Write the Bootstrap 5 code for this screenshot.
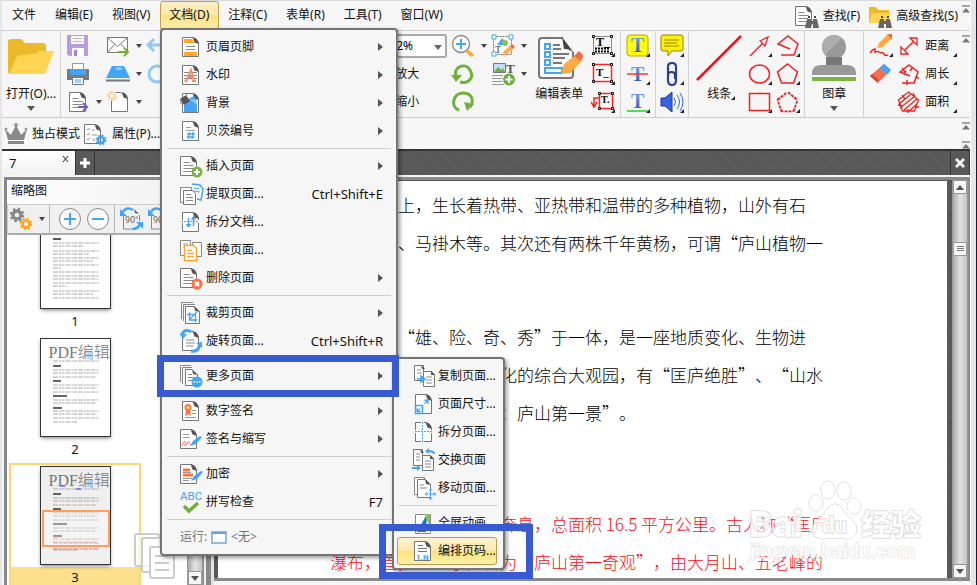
<!DOCTYPE html>
<html lang="zh-CN">
<head>
<meta charset="utf-8">
<meta name="viewport" content="width=device-width, initial-scale=1">
<title>PDF编辑器</title>
<link rel="stylesheet" href="https://cdn.jsdelivr.net/npm/bootstrap@5.3.0/dist/css/bootstrap.min.css">
<style>
:root { --ui: #f6f6f6; --line: #cfcfcf; --mark: #395bd2; }
body { font: 12px/18px "Noto Sans", "Noto Sans CJK SC", sans-serif; color: #111; background: #e6e6e6; overflow: hidden; }
button { background: none; border: 0; padding: 0; color: inherit; font: inherit; white-space: nowrap; }
svg { display: block; flex: none; }
.ic { width: 24px; height: 24px; }
.app { margin: 0 5px 0 2px; background: var(--ui); border-right: 1px solid #fff; }
.desk { border-right: 1px solid #0a1c4c; }
/* menu bar */
.bar-menu { height: 31px; padding-left: 1px; border-top: 1px solid #d9d9d9; border-bottom: 1px solid var(--line); }
.bar-menu .top-item { height: 28px; padding: 0 9px 0 8px; border: 1px solid transparent; border-radius: 3px 3px 0 0; }
.bar-menu .top-item.on { background: linear-gradient(#fbeeca, #fce9a8 48%, #fadf83 52%, #fff0a8); border-color: #c3a04f; }
.pin { width: 8px; height: 8px; }
/* tool bar */
.bar-tools { height: 87px; border-bottom: 1px solid var(--line); }
.tool-group { padding: 1px 5px 0 5px; position: relative; }
.ruled { border-right: 1px solid #d2d2d2; }
.tool-col > * { height: 28px; display: flex; align-items: center; }
.caret::after { content: ""; border: 3px solid transparent; border-top: 4px solid #444; border-bottom: 0; margin-left: 6px; }
.more { position: relative; }
.more::after { content: ""; position: absolute; right: 0; bottom: 3px; border-left: 4px solid transparent; border-bottom: 4px solid #222; }
.big { display: flex; flex-direction: column; align-items: center; height: 84px; }
.down { border: 4px solid transparent; border-top: 5px solid #555; border-bottom: 0; margin-top: 3px; }
.c-40 { width: 40px; } .c-50 { width: 50px; } .c-24 { width: 24px; } .c-104 { width: 104px; }
.zoom-group { margin-left: 172px; }
.zoom-box { width: 100px; height: 24px !important; margin: 2px 0; border: 2px solid #aaa; border-radius: 3px; background: #fff; appearance: none; padding: 0 0 0 30px; font: inherit; }
.zoom-wrap { position: relative; }
.zoom-wrap::after { content: ""; position: absolute; right: 9px; top: 13px; border: 4px solid transparent; border-top: 5px solid #666; border-bottom: 0; }
.big svg { width: 48px; height: 48px; margin: 2px 0 3px; }
.bar-extra { height: 31px; padding-left: 2px; }
/* tabs */
.bar-tabs { height: 26px; background: repeating-linear-gradient(45deg, #565656 0 1px, #5b5b5b 1px 3px); border-top: 2px solid #333; }
.file-tab { width: 73px; background: linear-gradient(#fff, #f1f1f1); padding: 0 6px 0 7px; font-size: 13px; }
.tab-btn { width: 20px; border-right: 1px solid #333; border-left: 1px solid #333; }
.work { min-height: 0; padding-top: 2px; }
/* thumbnails */
.side { width: 200px; margin-left: 2px; border: 3px solid #898989; border-bottom: 0; border-right-width: 1px; background: var(--ui); }
.side-head { height: 24px; font-size: 12px; line-height: 21px; padding: 0 4px; background: linear-gradient(90deg, #fff, #efefef); }
.side-tools { height: 31px; border: 1px solid #ccc; border-bottom: 2px solid #aaa; background: #f0f0f0; padding: 0 1px; }
.thumb-list { margin: -28px auto 0 2px; width: 132px; }
.thumb { height: 128px; padding-top: 4px; text-align: center; border: 0 solid #fcd873; }
.thumb.on { border-width: 2px; padding-top: 2px; background: linear-gradient(#fff 0 102px, #fde08c 102px); }
.sheet { width: 69px; height: 97px; margin: 0 auto; background: #fff; outline: 1px solid #333; box-shadow: 0 2px 4px #0008; overflow: hidden; position: relative; }
.sheet svg { width: 69px; height: 97px; }
.sheet-title { font: 300 16px/20px "Liberation Serif", "Noto Sans CJK SC", serif; color: #777; position: absolute; left: 8px; top: 4px; white-space: nowrap; }
.view-box { position: absolute; left: 1px; right: 0; top: 43px; height: 37px; border: 2px solid #ff9c62; background: #fff5; }
.thumb.on .sheet { background: #efefef; }
.page-no { font-size: 13px; line-height: 27px; }
.track { width: 16px; background: linear-gradient(90deg, #a9a9a9, #e2e2e2 50%, #c4c4c4); border: 1px solid #999; border-width: 0 1px; }
.track button { width: 100%; height: 14px; background: #f6f6f6; border: 1px solid #999; display: flex; align-items: center; justify-content: center; }
.split { width: 10px; background: linear-gradient(90deg, #eee 0 2px, #888 2px 7px, #e3e3e3 7px); }
/* document */
.viewer { border: 3px solid #8a8a8a; border-left: 0; border-right-width: 2px; }
.desk-dark { background: repeating-linear-gradient(45deg, #545454 0 1px, #5b5b5b 1px 3px); padding: 1px 5px 0 4px; }
.paper { background: #fff; padding: 5px 0 0 112px; font: 300 17px/38px "Noto Sans CJK SC", sans-serif; color: #000; text-spacing-trim: space-all; font-kerning: none; }
.paper p { margin: 0; height: 38px; white-space: nowrap; }
.paper .para-gap { height: 18px; } .paper .para-big { height: 35px; }
.in-4 { padding-left: 4em; } .in-10 { padding-left: 10em; }
.paper .red { color: #f2121c; }
/* pop-up menus */
.pop { display: block; padding: 3px 0; background: var(--ui); border: 2px solid #747474; border-radius: 4px; font-size: 12px; color: #111; box-shadow: 2px 2px 4px #0006; min-width: 0; z-index: 20; }
.pop-main { left: 160px; top: 28px; width: 238px; }
.pop-sub { left: 392px; top: 357px; width: 113px; z-index: 21; }
.pop .dropdown-item { height: 28px; display: flex; align-items: center; padding: 0 13px 0 18px; color: inherit; font-size: 12px; }
.pop .dropdown-item span { padding-left: 2px; }
.pop .dropdown-item kbd { margin-left: auto; background: none; color: inherit; padding: 0; font: inherit; font-size: 13px; }
.pop .dropdown-divider { margin: 3px 5px; border-color: #cfcfcf; opacity: 1; }
.sub::after { content: ""; margin-left: auto; border: 4px solid transparent; border-left: 5px solid #555; border-right: 0; }
.pop-sub .dropdown-item { padding: 0 4px 0 18px; }
.pop-sub .dropdown-item.hot { background: linear-gradient(#fdf3d3, #fde9ab 48%, #fce07d 52%, #fff3a3); border: 1px solid #bd9a55; border-radius: 3px; margin: 0 3px; width: auto; padding: 0 0 0 14px; }
.frame { position: absolute; border: 7px solid var(--mark); z-index: 30; pointer-events: none; }
.frame-a { left: 157px; top: 355px; width: 242px; height: 42px; }
.frame-b { left: 379px; top: 524px; width: 154px; height: 55px; }
.stamp-brand { position: absolute; left: 748px; top: 478px; width: 184px; height: 88px; pointer-events: none; }
.stamp-copy { position: absolute; left: 133px; top: 532px; width: 44px; height: 48px; }
</style>
<script src="https://cdn.jsdelivr.net/npm/bootstrap@5.3.0/dist/js/bootstrap.bundle.min.js"></script>
</head>
<body class="vh-100 position-relative">
<svg width="0" height="0" class="position-absolute" aria-hidden="true">
<defs>
<linearGradient id="gT" x1="0" x2="0" y1="0" y2="1"><stop offset="0" stop-color="#7fb0f0"/><stop offset="1" stop-color="#1d50b0"/></linearGradient>
<symbol id="doc" viewBox="0 0 24 24"><path d="M13 2.500H2.500v19h16V8" fill="#fff" stroke="#777"/><path d="M12.500 2c3 .3 6 3 6.500 7l-4.500-1.500z" fill="#555"/></symbol>
<symbol id="ln" viewBox="0 0 24 24"><path d="M5.500 8.500h6M5.500 11.500h10M5.500 14.500h10M5.500 17.500h8" stroke="#888" fill="none"/></symbol>
<symbol id="docl" viewBox="0 0 24 24"><use href="#doc"/><use href="#ln"/></symbol>
<symbol id="head" viewBox="0 0 24 24"><use href="#doc"/><path d="M4 4h8l3 4H4zM4 17h13v4H4z" fill="#ffa726"/><path d="M6 11.500h9M6 14.500h9" stroke="#888"/></symbol>
<symbol id="water" viewBox="0 0 24 24"><use href="#doc"/><path d="M4 9.500h13M4 12.500h13M4 15.500h13" stroke="#888"/><path d="M6 18l5-11 3 11M8 14h5M4.500 18h3M12 18h4" stroke="#ff8a65" stroke-width="2" fill="none"/></symbol>
<symbol id="back" viewBox="0 0 24 24"><use href="#doc"/><path d="M4 10l10-5 3 4v12H4z" fill="#42a5f5"/><path d="M9 8l8 1v5l-5-4z" fill="#90caf9"/><path d="M0 8l6-4 4 6-6 4z" fill="#555"/><path d="M6 4l2-2M1 9v4" stroke="#777"/></symbol>
<symbol id="bates" viewBox="0 0 24 24"><use href="#doc"/><path d="M6 8.500h5M6 11.500h9" stroke="#999"/><path d="M9.500 13l-1 7M13 13l-1 7M7 15h8M6.500 18h8" stroke="#42a5f5" stroke-width="1.300"/></symbol>
<symbol id="ins" viewBox="0 0 24 24"><g transform="translate(-2 0)"><use href="#docl" width="24" height="24"/></g><circle cx="17" cy="18" r="5.500" fill="#7cb342"/><path d="M17 15v6M14 18h6" stroke="#fff" stroke-width="2"/></symbol>
<symbol id="del" viewBox="0 0 24 24"><g transform="translate(-2 0)"><use href="#docl" width="24" height="24"/></g><circle cx="17" cy="18" r="5.500" fill="#ff7043"/><path d="M15 16l4 4M19 16l-4 4" stroke="#fff" stroke-width="2"/></symbol>
<symbol id="ext" viewBox="0 0 24 24"><path d="M12 2l8 1 3 4-2 11-4-1" fill="#fff" stroke="#42a5f5" stroke-width="1.500"/><path d="M14 6l5 1M14 9l6 1" stroke="#42a5f5"/><path d="M.5 5.500h11v15H.5z" fill="#fff" stroke="#888"/><path d="M3.500 8.500h9l3 3v11h-12z" fill="#fff" stroke="#777"/><path d="M6 12.500h5M6 15.500h7M6 18.500h7" stroke="#888"/></symbol>
<symbol id="spl" viewBox="0 0 24 24"><use href="#doc"/><path d="M0 11.500h22" stroke="#f6f6f6" stroke-width="3"/><path d="M1 11.500h18" stroke="#999" stroke-dasharray="2 1"/><path d="M8.500 8v9M13.500 7v9" stroke="#42a5f5" stroke-width="1.500"/><path d="M5.500 14l3 3.500 3-3.500zM10.500 9.500l3-3.500 3 3.500z" fill="#42a5f5"/></symbol>
<symbol id="rep" viewBox="0 0 24 24"><path d="M.5 2.500h10v15H.5zM12.500 4.500h9v14h-9z" fill="#fff" stroke="#888"/><path d="M3 6h5M3 9h3" stroke="#999"/><path d="M4.500 7.500h9l3 3v12h-12z" fill="#fff" stroke="#ffa726" stroke-width="1.500"/><path d="M7 12.500h5M7 15.500h7M7 18.500h7" stroke="#ffa726" stroke-width="1.500"/></symbol>
<symbol id="crop" viewBox="0 0 24 24"><path d="M1.500 18V1.500H13M3.500 20V3.500H15" fill="none" stroke="#888"/><path d="M5.500 5.500h9l5 5v12h-14z" fill="#fff" stroke="#777"/><path d="M14 5l6 6-5-1z" fill="#555"/><path d="M9.500 11v8h8M7 13.500h8.500V21M9 19l8-8" stroke="#42a5f5" fill="none" stroke-width="1.300"/></symbol>
<symbol id="rot" viewBox="0 0 24 24"><use href="#doc"/><path d="M6 11h8M6 14h9M6 17h7" stroke="#888"/><path d="M11 3C7 0 3 2 2.500 5M11 22c4 1 8-1 8-5" stroke="#42a5f5" stroke-width="3" fill="none"/><path d="M-1 4l8 1-4 5zM22 19l-6-5 6-1z" fill="#42a5f5"/></symbol>
<symbol id="mor" viewBox="0 0 24 24"><path d="M.5 18V1.500H11M2.500 20V3.500H12" fill="none" stroke="#888"/><path d="M12 5.500H5.500v16h12V10" fill="#fff" stroke="#777"/><path d="M12 5l6 6-5-1z" fill="#555"/><path d="M8 10.500h4M8 13.500h6M8 16.500h4" stroke="#888"/><circle cx="17" cy="18" r="5.500" fill="#42a5f5"/><path d="M13.500 18H15M16.300 18h1.500M19 18h1.500" stroke="#fff" stroke-width="1.500"/></symbol>
<symbol id="cert" viewBox="0 0 24 24"><use href="#doc"/><path d="M6 11l-1 6 3-2 3 2-1-6" fill="#ff7043"/><circle cx="8" cy="8.500" r="3.500" fill="#ff7043"/><circle cx="8" cy="8.500" r="1.700" fill="#ffd54f"/><path d="M12 11.500h4M12 14.500h4M5 18.500h11" stroke="#999"/></symbol>
<symbol id="sig" viewBox="0 0 24 24"><g transform="translate(-2 0)"><use href="#doc" width="24" height="24"/></g><path d="M3 7.500h6M3 10.500h7" stroke="#999"/><path d="M2 19c2-6 4-6 3-2s2 0 3-2 1 3 3 2" stroke="#ff7043" fill="none"/><path d="M10 19l3-5 7-5 2 1-6 7z" fill="#42a5f5"/></symbol>
<symbol id="enc" viewBox="0 0 24 24"><g transform="translate(-2 0)"><use href="#doc" width="24" height="24"/></g><path d="M3 8h7M3 13h10" stroke="#ff7043" stroke-width="3"/><path d="M3 10.500h8M3 16.500h9M3 18.500h6" stroke="#999"/><path d="M11 19l3-5 7-5 2 1-6 7z" fill="#42a5f5"/></symbol>
<symbol id="abc" viewBox="0 0 24 24"><text x="0" y="10" font-size="11.500" fill="#42a5f5" font-family="Roboto">ABC</text><path d="M4 16l5 5 9-8" stroke="#6fb03a" stroke-width="3.500" fill="none"/></symbol>
<symbol id="copy" viewBox="0 0 24 24"><path d="M2.500 1.500h9v15h-9zM11.500 7.500h8l3 3v12h-11z" fill="#fff" stroke="#777"/><path d="M9 1l4 4h-3zM19 7l4 4h-4z" fill="#555"/><path d="M5 6h4M5 9h5M14 13h6M14 16h6M14 19h6" stroke="#888"/><path d="M5 15h6M9 12l4 3-4 3z" stroke="#42a5f5" stroke-width="1.500" fill="#42a5f5"/></symbol>
<symbol id="size" viewBox="0 0 24 24"><use href="#doc" x="1"/><path d="M3.500 13.500h7v8h-7z" fill="#fff" stroke="#42a5f5" stroke-width="1.500"/><path d="M9 15.500L5.500 19M5 16.500V20h3.500z" stroke="#42a5f5" fill="#42a5f5"/><path d="M12 12l3.500-3.500M12.500 8H16v3.500z" stroke="#42a5f5" fill="#42a5f5"/></symbol>
<symbol id="cut" viewBox="0 0 24 24"><use href="#doc" x="1"/><path d="M10.500 2v20M3 11.500h17" stroke="#fff" stroke-width="3"/><path d="M10.500 2v20M3 11.500h17" stroke="#42a5f5" stroke-dasharray="2 1"/></symbol>
<symbol id="swap" viewBox="0 0 24 24"><path d="M1.500 1.500h9v16h-9zM10.500 7.500h8l3 3v12h-11z" fill="#fff" stroke="#777"/><path d="M8 1l4 4h-3zM18 7l4 4h-4z" fill="#555"/><path d="M4 6h4M4 9h4M4 12h4M13 13h6M13 16h6M13 19h6" stroke="#888"/><path d="M22 6c0-3-3-3-6-3M0 20h6" stroke="#42a5f5" stroke-width="2" fill="none"/><path d="M13 3l4-3v6zM9 20l-4-3v6z" fill="#42a5f5"/></symbol>
<symbol id="move" viewBox="0 0 24 24"><path d="M2.500 1.500h10v17h-10z" fill="#fff" stroke="#888"/><path d="M5.500 3.500h8l5 5v13h-13z" fill="#fff" stroke="#777"/><path d="M13 3l6 6-5-1z" fill="#555"/><path d="M8 9h4M8 12h7" stroke="#888"/><path d="M18.500 13v10M13.500 18h10M17 14.500l1.500-2 1.500 2M17 21.500l1.500 2 1.500-2M15 16.500L13 18l2 1.500M22 16.500l2 1.500-2 1.500" stroke="#42a5f5" fill="none"/></symbol>
<symbol id="full" viewBox="0 0 24 24"><path d="M3.500 3.500h15v19h-15z" fill="#fff" stroke="#888"/><path d="M5 21L15 3l-1 18z" fill="#0d7bd1"/><path d="M13 3h5v15z" fill="#8bc34a"/></symbol>
<symbol id="num" viewBox="0 0 24 24"><use href="#doc"/><path d="M6 6.500h5M6 9.500h9M6 12.500h9" stroke="#777"/><path d="M3 14h15v7H3z" fill="#fff"/><text x="4" y="21" font-size="8" font-weight="700" fill="#42a5f5" font-family="Roboto">1.N</text></symbol>
<symbol id="save" viewBox="0 0 24 24"><path d="M1 1h21v21H3l-2-2z" fill="#b79de0"/><path d="M5 2h13v8H5z" fill="#f8f6fb"/><path d="M7 4.500h9M7 7.500h9" stroke="#bbb"/><path d="M6 14h12v8H6z" fill="#fff"/><path d="M8 16h3v6H8z" fill="#a283d4"/></symbol>
<symbol id="print" viewBox="0 0 24 24"><path d="M6.500 1.500h11v7h-11z" fill="#fff" stroke="#999"/><path d="M1 7h4v2h14V7h4v11H1z" fill="#7a7a7a"/><path d="M4 7h16v6H4z" fill="#42a5f5"/><path d="M6.500 15.500h11v7h-11z" fill="#fff" stroke="#777"/><path d="M8.500 18h7M8.500 20h7" stroke="#42a5f5"/></symbol>
<symbol id="expo" viewBox="0 0 24 24"><use href="#docl" x="1"/><path d="M12 17h8M17 13l4 4-4 4" stroke="#7e57c2" stroke-width="2" fill="none"/></symbol>
<symbol id="mail" viewBox="0 0 24 24"><path d="M1.500 3.500h20v15h-20z" fill="#fff" stroke="#777"/><path d="M1.500 3.500l10 9 10-9M1.500 18.500l7-8M21 17l-6-7" fill="none" stroke="#777"/><path d="M12 18h9M18 14l4 4-4 4" stroke="#6fb03a" stroke-width="2" fill="none"/></symbol>
<symbol id="scan" viewBox="0 0 24 24"><path d="M6 4h12l6 12H0z" fill="#42a5f5"/><path d="M9 8l2-3h4l2 3z" fill="#90caf9"/><path d="M0 17.500h24v2H0z" fill="#777"/></symbol>
<symbol id="newd" viewBox="0 0 24 24"><path d="M15 2.500H5.500v19h16V8" fill="#fff" stroke="#777"/><path d="M15.500 2c3 .3 6 3 6.500 7l-4.500-1.500z" fill="#555"/><circle cx="6" cy="6" r="5" fill="#f6f6f6"/><path d="M6 1v10M1 6h10M2.500 2.500l7 7M9.500 2.500l-7 7" stroke="#ffa726"/><circle cx="6" cy="6" r="2" fill="#fff"/></symbol>
<symbol id="undo" viewBox="0 0 24 24"><path d="M3 11h14M8 5l-6 6 6 6" stroke="#90caf9" stroke-width="3" fill="none"/></symbol>
<symbol id="globe" viewBox="0 0 24 24"><circle cx="11" cy="12" r="8" stroke="#90caf9" stroke-width="3" fill="none"/></symbol>
<symbol id="mag" viewBox="0 0 24 24"><circle cx="10" cy="10" r="8.500" fill="#fafafa" stroke="#888" stroke-width="1.300"/><path d="M10 5v10M5 10h10" stroke="#42a5f5" stroke-width="2"/><path d="M16 17l6 5" stroke="#ffa726" stroke-width="3.500"/></symbol>
<symbol id="ccw" viewBox="0 0 24 24"><path d="M5 14C2 5 14 0 19 8s-2 14-10 12" stroke="#6fb03a" stroke-width="3" fill="none"/><path d="M0 13h11l-6 7z" fill="#6fb03a"/></symbol>
<symbol id="cw" viewBox="0 0 24 24"><path d="M8 20C-1 17 2 3 12 3s11 9 7 14" stroke="#6fb03a" stroke-width="3" fill="none"/><path d="M13 12l10 2-7 7z" fill="#6fb03a"/></symbol>
<symbol id="edc" viewBox="0 0 24 24"><path d="M2.500 2.500h18v18h-18z" fill="#fff" stroke="#777" stroke-dasharray="2 1"/><path d="M1 1h4v4H1zM18 1h4v4h-4zM1 18h4v4H1z" fill="#fff" stroke="#42a5f5"/><path d="M6 11l5-7 5 7z" fill="#42a5f5"/><circle cx="14" cy="9" r="3" fill="#8bc34a"/><text x="4" y="19" font-size="10" font-family="Liberation Serif" fill="#444">T</text><path d="M11 22l2-5 7-6 3 3-7 6z" fill="#ffab40"/><path d="M19 12l2-2 3 3-2 2z" fill="#ef6c4b"/></symbol>
<symbol id="imgt" viewBox="0 0 24 24"><path d="M2.500 1.500h12v9h-12z" fill="#bbdefb" stroke="#777"/><path d="M3 10l4-5 3 3 2-2 2 4z" fill="#6fb03a"/><text x="15" y="11" font-size="13" font-weight="700" font-family="Liberation Serif" fill="#555">T</text><path d="M1 13.500h11M1 16.500h10M1 19.500h10M1 22.500h12" stroke="#999"/><circle cx="18" cy="17.500" r="6" fill="#6fb03a"/><path d="M18 14v7M14.500 17.500h7" stroke="#fff" stroke-width="2"/></symbol>
<symbol id="form" viewBox="0 0 48 48"><path d="M28 4H7q-3 0-3 3v34q0 3 3 3h28q3 0 3-3V18" fill="#fafafa" stroke="#777" stroke-width="2"/><path d="M27 3l12 16c-4-4-8-4-10-4z" fill="#444"/><path d="M10 10h5v5h-5zM10 18h5v5h-5zM10 26h5v5h-5zM10 34h17v5H10z" fill="#fff" stroke="#42a5f5" stroke-width="2"/><path d="M18 11h7M18 15h8M18 20h16M18 24h12M18 29h9" stroke="#777" stroke-width="2"/><path d="M26 40l3-10L42 20l6 6-13 13z" fill="#ffab40"/><path d="M39 22l5-5 5 5-4 5z" fill="#ef6c4b"/></symbol>
<symbol id="hnd" viewBox="0 0 24 24"><path d="M1.500 1.500h2v2h-2zM19.500 1.500h2v2h-2zM1.500 18.500h2v2h-2zM19.500 18.500h2v2h-2z" fill="#fff" stroke="#000"/></symbol>
<symbol id="tf1" viewBox="0 0 24 24"><path d="M2.500 2.500h18v17h-18z" fill="none" stroke="#222" stroke-dasharray="1 1"/><use href="#hnd"/><text x="5" y="12" font-size="12" font-weight="700" font-family="Liberation Serif">T_</text><path d="M4 14.500h15M4 17.500h15" stroke="#000" stroke-width="2" stroke-dasharray="2 1"/></symbol>
<symbol id="tf2" viewBox="0 0 24 24"><path d="M2.500 2.500h18v17h-18z" fill="#fff" stroke="#f22" stroke-width="1.500"/><use href="#hnd"/><text x="5" y="14" font-size="11" font-weight="700" font-family="Liberation Serif">T_</text></symbol>
<symbol id="tf3" viewBox="0 0 24 24"><path d="M8.500 3.500h13v15h-13z" fill="#fff" stroke="#f22" stroke-width="1.500"/><path d="M8 8H3v8M0 12l3 5 3-5" stroke="#f22" fill="none" stroke-width="1.500"/><path d="M7.500 2.500h2v2h-2zM20.500 2.500h2v2h-2zM7.500 17.500h2v2h-2zM20.500 17.500h2v2h-2z" fill="#fff" stroke="#000"/><text x="10" y="13" font-size="10" font-weight="700" font-family="Liberation Serif">T.</text></symbol>
<symbol id="t1" viewBox="0 0 24 24"><rect x="1" y="1" width="21" height="21" rx="3" fill="#ff0" stroke="#bba800"/><text x="5" y="18" font-size="20" font-weight="700" font-family="Liberation Serif" fill="url(#gT)">T</text></symbol>
<symbol id="t2" viewBox="0 0 24 24"><text x="5" y="19" font-size="20" font-weight="700" font-family="Liberation Serif" fill="url(#gT)">T</text><path d="M1 12h21" stroke="#f33" stroke-width="1.500"/></symbol>
<symbol id="t3" viewBox="0 0 24 24"><text x="5" y="18" font-size="20" font-weight="700" font-family="Liberation Serif" fill="url(#gT)">T</text><path d="M1 21h21" stroke="#1bd321" stroke-width="1.500"/></symbol>
<symbol id="note" viewBox="0 0 24 24"><path d="M3 1h18q2 0 2 2v12q0 2-2 2h-9l-4 5v-5H3q-2 0-2-2V3q0-2 2-2z" fill="#fff000" stroke="#8d8500"/><path d="M4 6h15M4 9h13M4 12h15" stroke="#8d8500"/></symbol>
<symbol id="clip" viewBox="0 0 24 24"><path d="M8 12V5q0-4 4-4t4 4v13q0 5-4 5t-4-5v-5q0-3 3.500-3t3.500 3v4" stroke="#2b3f94" stroke-width="2.200" fill="none"/></symbol>
<symbol id="snd" viewBox="0 0 24 24"><path d="M1 8h4l7-6v20l-7-6H1z" fill="#3565e0" stroke="#22398c"/><path d="M14 8q3 4 0 8M17 5q5 7 0 14M20 3q6 9 0 18" stroke="#3565e0" fill="none"/></symbol>
<symbol id="line" viewBox="0 0 48 48"><path d="M2 46L46 2" stroke="#f01418" stroke-width="2.500"/></symbol>
<symbol id="arr" viewBox="0 0 24 24"><path d="M2 22L17 7" stroke="#e22" stroke-width="1.500"/><path d="M12 7l8-4-3 9z" fill="#fff" stroke="#e22" stroke-width="1.300"/></symbol>
<symbol id="cir" viewBox="0 0 24 24"><ellipse cx="11.500" cy="12" rx="10" ry="9" fill="none" stroke="#e22" stroke-width="1.500"/></symbol>
<symbol id="rec" viewBox="0 0 24 24"><path d="M1.500 3.500h20v17h-20z" fill="none" stroke="#e22" stroke-width="1.500"/></symbol>
<symbol id="pol" viewBox="0 0 24 24"><path d="M14 15L2 10 12 2l10 8-4 11H5" fill="none" stroke="#e22" stroke-width="1.500"/></symbol>
<symbol id="pen5" viewBox="0 0 24 24"><path d="M11.500 2l10 8-4 11h-12L1.500 10z" fill="none" stroke="#e22" stroke-width="1.500"/></symbol>
<symbol id="cld" viewBox="0 0 24 24"><path d="M11.500 3l9 7-3.500 10.500h-11L2.500 10z" fill="none" stroke="#e22" stroke-width="3.500" stroke-dasharray="3 1" stroke-linejoin="round"/><path d="M11.500 3.500l8.500 7-3.500 9.500h-10L3 10.500z" fill="#f6f6f6" stroke="#f6f6f6"/></symbol>
<symbol id="stamp" viewBox="0 0 48 48"><circle cx="24" cy="13" r="12" fill="#999"/><path d="M16 23h16v10H16z" fill="#777"/><path d="M24 1a12 12 0 0 0-9 20L32 4a12 12 0 0 0-8-3z" fill="#adadad"/><path d="M2 41v-3q1-7 9-7h26q8 0 9 7v3z" fill="#999"/><path d="M2 43h44v4H2z" fill="#7cb342"/></symbol>
<symbol id="pencil" viewBox="0 0 24 24"><path d="M8 14l2-5 9-9 4 4-9 9z" fill="#ffab40"/><path d="M18 0h5v6z" fill="#ef6c4b"/><path d="M1 19c4-5 6-5 5-2s3-1 4 1 4-1 5 2 3 0 4 2" stroke="#e22" stroke-width="1.500" fill="none"/></symbol>
<symbol id="era" viewBox="0 0 24 24"><path d="M1 14L15 2l7 6L9 21z" fill="#f4704d"/><path d="M11 6l4-4 7 6-4 5z" fill="#42a5f5"/><path d="M1 14l8 7v-4l-6-5z" fill="#d44b2c"/></symbol>
<symbol id="dist" viewBox="0 0 24 24"><path d="M5 19L19 5" stroke="#e22" stroke-width="1.500"/><path d="M4 13v7h7zM13 4h7v7zM4 13l7 7M13 4l7 7" stroke="#e22" stroke-width="1.300" fill="#fff"/></symbol>
<symbol id="peri" viewBox="0 0 24 24"><path d="M13 14L3 10l9-7 9 7-4 11H5M5 6l3 4M16 5l-3 4M18 15l4 1M10 18v5M7 13l2-4" stroke="#e22" stroke-width="1.500" fill="none"/></symbol>
<symbol id="area" viewBox="0 0 24 24"><path d="M11.500 2l10 8-4 11h-12L1.500 10zM2 14l12-10M3 18l15-12M7 20l13-11M12 21l8-7M5 5l3 4M16 3l2 4M1 15l4 1M18 17h4M11 19v4" stroke="#e22" stroke-width="1.300" fill="none"/></symbol>
<symbol id="bino" viewBox="0 0 24 24"><path d="M12 15h4v2h2v-2h4l2 9h-6v-4h-2v4h-6z" fill="#666"/><path d="M13 13h2M19 13h2" stroke="#444" stroke-width="2"/></symbol>
<symbol id="find" viewBox="0 0 24 24"><g transform="translate(-2 0)"><use href="#docl" width="24" height="24"/></g><use href="#bino"/></symbol>
<symbol id="afind" viewBox="0 0 24 24"><path d="M1 3h7l2 3h11v13H1z" fill="#ecb92b"/><path d="M4 9h19l-4 10H1z" fill="#ffd453"/><use href="#bino"/></symbol>
<symbol id="folder" viewBox="0 0 48 48"><path d="M1 8q0-3 3-3h10l4 4h18q3 0 3 3v6L8 36l-5 4q-2 0-2-3z" fill="#ecb92b"/><path d="M10 22l20-3 1-2h16L38 40H2z" fill="#ffd453"/></symbol>
<symbol id="crown" viewBox="0 0 24 24"><path d="M1 7l6 6 5-10 5 10 6-6-3 11H4zM4 19h16v3H4z" fill="#888"/><circle cx="12" cy="3" r="2" fill="#999"/><circle cx="2" cy="7" r="1.500" fill="#999"/><circle cx="22" cy="7" r="1.500" fill="#999"/></symbol>
<symbol id="gear" viewBox="0 0 24 24"><circle cx="12" cy="12" r="9" fill="none" stroke="currentColor" stroke-width="4" stroke-dasharray="3.500 3.570"/><circle cx="12" cy="12" r="6" fill="none" stroke="currentColor" stroke-width="5"/></symbol>
<symbol id="prop" viewBox="0 0 24 24"><g transform="translate(-2 0)"><use href="#doc" width="24" height="24"/></g><path d="M3 7l1 1 2-2M3 12l1 1 2-2M3 17l1 1 2-2" stroke="#f4704d" fill="none"/><path d="M8 8h3M8 13h5M8 18h3" stroke="#999"/><use href="#gear" x="11" y="12" width="12" height="12" color="#42a5f5"/></symbol>
<symbol id="gears" viewBox="0 0 24 24"><use href="#gear" x="0" y="0" width="16" height="16" color="#888"/><use href="#gear" x="10" y="10" width="14" height="14" color="#ffa726"/></symbol>
<symbol id="zin" viewBox="0 0 24 24"><circle cx="12" cy="12" r="10.500" fill="#fafafa" stroke="#888"/><path d="M12 6v12M6 12h12" stroke="#42a5f5" stroke-width="2"/></symbol>
<symbol id="zout" viewBox="0 0 24 24"><circle cx="12" cy="12" r="10.500" fill="#fafafa" stroke="#888"/><path d="M6 12h12" stroke="#42a5f5" stroke-width="2"/></symbol>
<symbol id="r90" viewBox="0 0 24 24"><path d="M4.500 9v13h8M20.500 14V8" stroke="#888" fill="none"/><path d="M15 2l5 5-4-1z" fill="#555"/><text x="6" y="16" font-size="9" fill="#666" font-family="Roboto">90°</text><path d="M14 3C9 0 5 2 4 5M13 22c4 0 7-2 8-5" stroke="#42a5f5" stroke-width="2.500" fill="none"/><path d="M1 2v7h7zM24 22v-7h-7z" fill="#42a5f5"/></symbol>
<symbol id="up" viewBox="0 0 8 8"><path d="M0 1h8" stroke="#555"/><path d="M0 7.500h8L4 3z" fill="#777"/></symbol>
<symbol id="text" viewBox="0 0 69 97"><path d="M12 22h46M12 31h46M12 34h46M12 38h43M12 46h46M12 49h44M12 53h46M12 61h46M12 64h43M12 72h46M12 75h44M12 79h46M12 83h24" stroke="#aaa" stroke-width="1" stroke-dasharray="5 1 2 .5 3 1"/><path d="M12 27h8M12 42h8M12 57h14M12 69h9" stroke="#333" stroke-width="1.500"/></symbol>
<symbol id="text1" viewBox="0 0 69 97"><path d="M12 32h46M12 35h30M12 40h46M12 43h36M12 47h46M12 50h40M12 54h46M12 57h8M12 61h46M12 65h46M12 68h46M12 72h46M12 75h14M12 80h46M12 83h40M12 87h46" stroke="#aaa" stroke-width="1" stroke-dasharray="5 1 2 .5 3 1"/><path d="M12 28h8" stroke="#222" stroke-width="1.500"/></symbol>
</defs>
</svg>

<div class="desk h-100">
<div class="app h-100 d-flex flex-column">
  <nav class="bar-menu d-flex align-items-start flex-shrink-0" aria-label="主菜单">
    <button class="top-item">文件</button><button class="top-item">编辑(E)</button><button class="top-item">视图(V)</button><button class="top-item on">文档(D)</button><button class="top-item">注释(C)</button><button class="top-item">表单(R)</button><button class="top-item">工具(T)</button><button class="top-item">窗口(W)</button>
    <div class="ms-auto d-flex align-items-center gap-1 h-100">
      <button class="d-flex align-items-center gap-1 me-1"><svg class="ic"><use href="#find"/></svg>查找(F)</button>
      <button class="d-flex align-items-center"><svg class="ic me-1"><use href="#afind"/></svg>高级查找(S)</button>
      <svg class="pin align-self-start mt-1"><use href="#up"/></svg>
    </div>
  </nav>

  <div class="bar-tools d-flex flex-shrink-0" role="toolbar">
    <div class="tool-group ruled px-0"><button class="big px-1"><svg><use href="#folder"/></svg>打开(O)...<i class="down"></i></button></div>
    <div class="tool-group d-flex pe-0">
      <div class="tool-col c-40"><button aria-label="保存"><svg class="ic"><use href="#save"/></svg></button><button aria-label="打印"><svg class="ic"><use href="#print"/></svg></button><button class="caret" aria-label="导出"><svg class="ic"><use href="#expo"/></svg></button></div>
      <div class="tool-col c-40"><button class="caret" aria-label="邮件"><svg class="ic"><use href="#mail"/></svg></button><button class="caret" aria-label="扫描"><svg class="ic"><use href="#scan"/></svg></button><button class="caret" aria-label="新建"><svg class="ic"><use href="#newd"/></svg></button></div>
      <div class="tool-col c-24"><button aria-label="撤销"><svg class="ic"><use href="#undo"/></svg></button><button aria-label="浏览"><svg class="ic"><use href="#globe"/></svg></button></div>
    </div>
    <div class="tool-group zoom-group d-flex pe-1">
      <div class="tool-col c-104">
        <div class="zoom-wrap"><select class="zoom-box" aria-label="缩放"><option>69.2%</option></select></div>
        <button class="ms-5">放大</button><button class="ms-5">缩小</button>
      </div>
      <div class="tool-col c-40"><button class="caret" aria-label="放大镜"><svg class="ic"><use href="#mag"/></svg></button><button aria-label="逆时针"><svg class="ic"><use href="#ccw"/></svg></button><button aria-label="顺时针"><svg class="ic"><use href="#cw"/></svg></button></div>
      <div class="tool-col c-40"><button class="caret" aria-label="编辑内容"><svg class="ic"><use href="#edc"/></svg></button><button class="caret" aria-label="添加内容"><svg class="ic"><use href="#imgt"/></svg></button></div>
    </div>
    <div class="tool-group ruled d-flex gap-2 ps-0">
      <button class="big"><svg><use href="#form"/></svg>编辑表单</button>
      <div class="tool-col c-24"><button class="more" aria-label="打字机"><svg class="ic"><use href="#tf1"/></svg></button><button class="more" aria-label="文本框"><svg class="ic"><use href="#tf2"/></svg></button><button class="more" aria-label="标注"><svg class="ic"><use href="#tf3"/></svg></button></div>
    </div>
    <div class="tool-group ruled"><div class="tool-col c-24"><button class="more" aria-label="高亮"><svg class="ic"><use href="#t1"/></svg></button><button class="more" aria-label="删除线"><svg class="ic"><use href="#t2"/></svg></button><button class="more" aria-label="下划线"><svg class="ic"><use href="#t3"/></svg></button></div></div>
    <div class="tool-group ruled px-1"><div class="tool-col c-24"><button class="more" aria-label="便签"><svg class="ic"><use href="#note"/></svg></button><button class="more" aria-label="附件"><svg class="ic"><use href="#clip"/></svg></button><button class="more" aria-label="声音"><svg class="ic"><use href="#snd"/></svg></button></div></div>
    <div class="tool-group ruled d-flex gap-1 pe-1">
      <button class="big c-50"><svg><use href="#line"/></svg><span class="more px-1">线条</span></button>
      <div class="tool-col c-24"><button class="more" aria-label="箭头"><svg class="ic"><use href="#arr"/></svg></button><button class="more" aria-label="椭圆"><svg class="ic"><use href="#cir"/></svg></button><button class="more" aria-label="矩形"><svg class="ic"><use href="#rec"/></svg></button></div>
      <div class="tool-col c-24"><button class="more" aria-label="折线"><svg class="ic"><use href="#pol"/></svg></button><button class="more" aria-label="多边形"><svg class="ic"><use href="#pen5"/></svg></button><button class="more" aria-label="云形"><svg class="ic"><use href="#cld"/></svg></button></div>
    </div>
    <div class="tool-group ruled px-1"><button class="big c-50"><svg><use href="#stamp"/></svg>图章<i class="down"></i></button></div>
    <div class="tool-group d-flex gap-1 pe-0">
      <div class="tool-col c-24"><button class="more" aria-label="铅笔"><svg class="ic"><use href="#pencil"/></svg></button><button aria-label="橡皮擦"><svg class="ic"><use href="#era"/></svg></button></div>
      <div class="tool-col"><button class="more pe-2"><svg class="ic me-1"><use href="#dist"/></svg>距离</button><button class="more pe-2"><svg class="ic me-1"><use href="#peri"/></svg>周长</button><button class="more pe-2"><svg class="ic me-1"><use href="#area"/></svg>面积</button></div>
    </div>
    <svg class="pin ms-auto mt-1"><use href="#up"/></svg>
  </div>

  <div class="bar-extra d-flex align-items-center flex-shrink-0">
    <button class="d-flex align-items-center gap-1 me-1"><svg class="ic"><use href="#crown"/></svg>独占模式</button>
    <button class="d-flex align-items-center"><svg class="ic me-1"><use href="#prop"/></svg>属性(P)...</button>
    <div class="ms-auto h-100 d-flex flex-column justify-content-between pt-1"><svg class="pin"><use href="#up"/></svg><svg class="pin"><use href="#up"/></svg></div>
  </div>

  <div class="bar-tabs d-flex flex-shrink-0">
    <div class="file-tab d-flex justify-content-between align-items-center"><span>7</span><button class="align-self-start" aria-label="关闭标签"><svg width="7" height="18"><path d="M1 5l5 6M6 5l-5 6" stroke="#222"/></svg></button></div>
    <button class="tab-btn d-flex align-items-center justify-content-center" aria-label="新标签"><svg width="10" height="10"><path d="M5 0v10M0 5h10" stroke="#fff" stroke-width="3"/></svg></button>
    <button class="tab-btn ms-auto d-flex align-items-center justify-content-center" aria-label="关闭"><svg width="10" height="10"><path d="M1 1l8 8M9 1l-8 8" stroke="#fff" stroke-width="2.500"/></svg></button>
  </div>

  <div class="work d-flex flex-grow-1">
    <aside class="side d-flex flex-column flex-shrink-0">
      <div class="side-head flex-shrink-0">缩略图</div>
      <div class="side-tools d-flex align-items-center flex-shrink-0 overflow-hidden">
        <button class="caret d-flex align-items-center pe-1" aria-label="选项"><svg class="ic"><use href="#gears"/></svg></button>
        <span class="vr me-2"></span>
        <button class="me-1" aria-label="放大缩略图"><svg class="ic"><use href="#zin"/></svg></button>
        <button class="me-1" aria-label="缩小缩略图"><svg class="ic"><use href="#zout"/></svg></button>
        <span class="vr me-1"></span>
        <button class="me-1" aria-label="顺时针旋转"><svg class="ic"><use href="#r90"/></svg></button>
        <button aria-label="逆时针旋转"><svg class="ic"><use href="#r90"/></svg></button>
      </div>
      <div class="d-flex flex-grow-1 overflow-hidden bg-white">
        <div class="thumb-list">
          <div class="thumb"><div class="sheet"><svg><use href="#text1"/></svg></div><div class="page-no">1</div></div>
          <div class="thumb"><div class="sheet"><svg><use href="#text"/></svg><div class="sheet-title">PDF编辑器</div></div><div class="page-no">2</div></div>
          <div class="thumb on"><div class="sheet"><svg><use href="#text"/><path d="M19 19h5M35 22h5" stroke="#33f"/><path d="M12 70h5M12 76h46M12 82h46" stroke="#f66" stroke-dasharray="5 1 3 1"/></svg><div class="sheet-title">PDF编辑器</div><div class="view-box"></div></div><div class="page-no">3</div></div>
        </div>
        <div class="track d-flex flex-column justify-content-end"><button aria-label="向下"><svg width="8" height="5"><path d="M0 0h8L4 5z" fill="#555"/></svg></button></div>
      </div>
    </aside>
    <div class="split flex-shrink-0"></div>
    <main class="viewer d-flex flex-grow-1 mb-1">
      <div class="desk-dark flex-grow-1 overflow-hidden">
        <article class="paper h-100 overflow-hidden">
          <p class="in-4">上，生长着热带、亚热带和温带的多种植物，山外有石</p>
          <p class="in-4">、马褂木等。其次还有两株千年黄杨，可谓“庐山植物一</p>
          <p></p><p class="para-gap"></p>
          <p class="in-4">“雄、险、奇、秀”于一体，是一座地质变化、生物进</p>
          <p class="in-10">化的综合大观园，有“匡庐绝胜”、“山水</p>
          <p class="in-10">：庐山第一景”。</p>
          <p></p><p class="para-big"></p>
          <p class="red in-10">奔息，总面积 16.5 平方公里。古人称“匡庐</p>
          <p class="red">瀑布，首推三叠泉，誉为“庐山第一奇观”，由大月山、五老峰的</p>
        </article>
      </div>
      <div class="track d-flex flex-column"><button aria-label="向上"><svg width="8" height="5"><path d="M0 5h8L4 0z" fill="#555"/></svg></button><button class="mt-5" aria-label="滚动条"><svg width="7" height="6"><path d="M0 .5h7M0 2.500h7M0 4.500h7" stroke="#777"/></svg></button><button class="mt-auto" aria-label="向下"><svg width="8" height="5"><path d="M0 0h8L4 5z" fill="#555"/></svg></button></div>
    </main>
  </div>
</div>
</div>

<svg class="stamp-copy" viewBox="0 0 44 48" fill="#fffa" stroke="#ccc" stroke-width="2"><rect x="2" y="2" width="24" height="32" rx="2"/><rect x="9" y="6" width="24" height="34" rx="2"/><rect x="17" y="15" width="24" height="31" rx="2" fill="#fff"/><path d="M22 24h14M22 31h14M22 38h14"/></svg>
<svg class="stamp-brand" viewBox="0 0 184 88" fill="#fffc" stroke="#ccc" font-family="Roboto, 'Noto Sans CJK SC', sans-serif" font-weight="900" paint-order="stroke">
  <g font-size="37"><text x="1" y="59">Bai</text></g>
  <ellipse cx="80" cy="12" rx="7" ry="9"/><ellipse cx="96" cy="13" rx="7" ry="9"/><ellipse cx="68" cy="25" rx="7" ry="8"/><ellipse cx="106" cy="28" rx="7" ry="8"/>
  <path d="M87 26q6 0 9 8 9 8 12 13 3 12-8 14-7-1-13-1t-13 1q-12-1-9-13 3-6 12-13 4-9 10-9z"/>
  <text x="74" y="55" font-size="22">du</text><text x="113" y="57" font-size="30">经验</text><text x="2" y="80" font-size="20" font-weight="700" stroke="#ddd">jingyan.baidu.com</text>
</svg>

<div class="dropdown-menu show pop pop-main">
  <button class="dropdown-item sub"><svg class="ic"><use href="#head"/></svg><span>页眉页脚</span></button>
  <button class="dropdown-item sub"><svg class="ic"><use href="#water"/></svg><span>水印</span></button>
  <button class="dropdown-item sub"><svg class="ic"><use href="#back"/></svg><span>背景</span></button>
  <button class="dropdown-item sub"><svg class="ic"><use href="#bates"/></svg><span>贝茨编号</span></button>
  <hr class="dropdown-divider">
  <button class="dropdown-item sub"><svg class="ic"><use href="#ins"/></svg><span>插入页面</span></button>
  <button class="dropdown-item"><svg class="ic"><use href="#ext"/></svg><span>提取页面...</span><kbd>Ctrl+Shift+E</kbd></button>
  <button class="dropdown-item"><svg class="ic"><use href="#spl"/></svg><span>拆分文档...</span></button>
  <button class="dropdown-item"><svg class="ic"><use href="#rep"/></svg><span>替换页面...</span></button>
  <button class="dropdown-item sub"><svg class="ic"><use href="#del"/></svg><span>删除页面</span></button>
  <hr class="dropdown-divider">
  <button class="dropdown-item sub"><svg class="ic"><use href="#crop"/></svg><span>裁剪页面</span></button>
  <button class="dropdown-item"><svg class="ic"><use href="#rot"/></svg><span>旋转页面...</span><kbd>Ctrl+Shift+R</kbd></button>
  <hr class="dropdown-divider">
  <button class="dropdown-item sub"><svg class="ic"><use href="#mor"/></svg><span>更多页面</span></button>
  <hr class="dropdown-divider">
  <button class="dropdown-item sub"><svg class="ic"><use href="#cert"/></svg><span>数字签名</span></button>
  <button class="dropdown-item sub"><svg class="ic"><use href="#sig"/></svg><span>签名与缩写</span></button>
  <hr class="dropdown-divider">
  <button class="dropdown-item sub"><svg class="ic"><use href="#enc"/></svg><span>加密</span></button>
  <button class="dropdown-item"><svg class="ic"><use href="#abc"/></svg><span>拼写检查</span><kbd>F7</kbd></button>
  <hr class="dropdown-divider">
  <button class="dropdown-item text-secondary">运行:<svg class="mx-1" width="16" height="13"><path d="M1 1h14v11H1z" fill="#fff" stroke="#7ba7d4" stroke-width="1.500"/><path d="M1 2h14" stroke="#6aa0d8" stroke-width="2"/></svg>&lt;无&gt;</button>
</div>
<div class="dropdown-menu show pop pop-sub">
  <button class="dropdown-item"><svg class="ic"><use href="#copy"/></svg><span>复制页面...</span></button>
  <button class="dropdown-item"><svg class="ic"><use href="#size"/></svg><span>页面尺寸...</span></button>
  <button class="dropdown-item"><svg class="ic"><use href="#cut"/></svg><span>拆分页面...</span></button>
  <button class="dropdown-item"><svg class="ic"><use href="#swap"/></svg><span>交换页面</span></button>
  <button class="dropdown-item"><svg class="ic"><use href="#move"/></svg><span>移动页面...</span></button>
  <hr class="dropdown-divider">
  <button class="dropdown-item"><svg class="ic"><use href="#full"/></svg><span>全屏动画</span></button>
  <button class="dropdown-item hot"><svg class="ic"><use href="#num"/></svg><span>编排页码...</span></button>
</div>
<div class="frame frame-a"></div>
<div class="frame frame-b"></div>
</body>
</html>
